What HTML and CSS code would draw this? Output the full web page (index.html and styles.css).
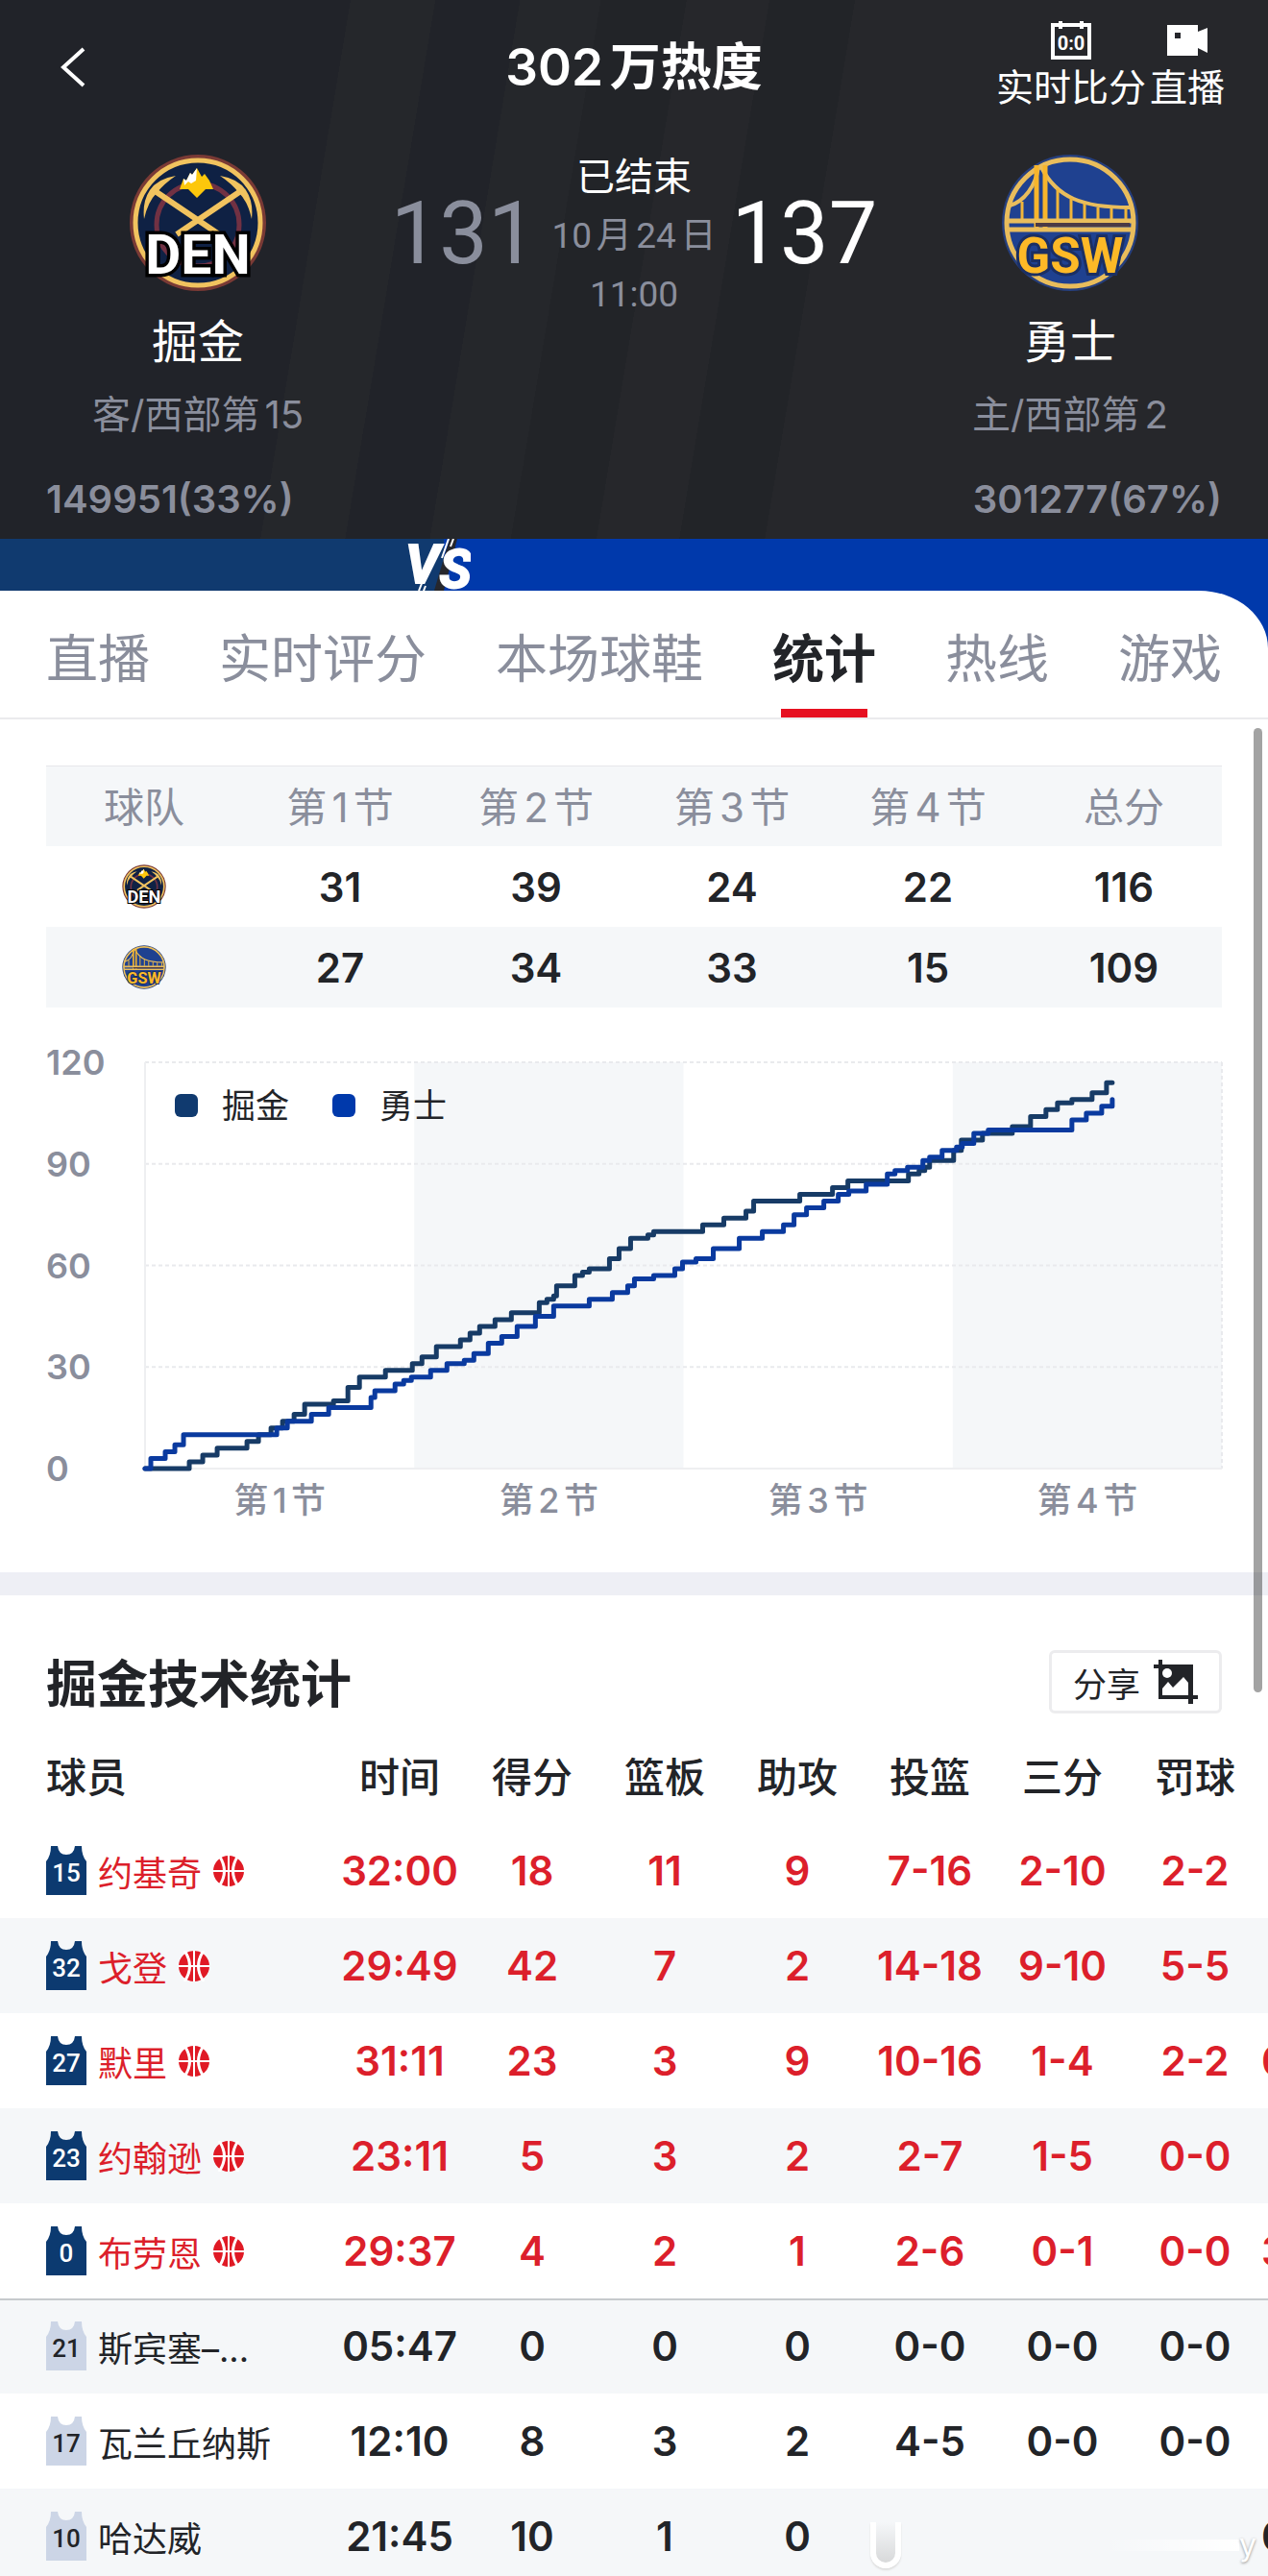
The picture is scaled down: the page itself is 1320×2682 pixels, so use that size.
FILE: index.html
```
<!DOCTYPE html>
<html lang="zh-CN">

<head>
    <meta charset="UTF-8">
    <meta name="viewport" content="width=device-width, initial-scale=1.0">
    <title>掘金 vs 勇士</title>
    <link rel="stylesheet" href="styles.css">
</head>

<body>
    <!-- Shared icons -->
    <svg class="sprite" aria-hidden="true">
        <symbol id="logo-den" viewBox="0 0 144 144">
            <circle cx="72" cy="72" r="71" fill="#7a3a35"/>
            <circle cx="72" cy="72" r="65" fill="#0f2144" stroke="#f1c35f" stroke-width="5"/>
            <circle cx="72" cy="74" r="43" fill="none" stroke="#713143" stroke-width="5"/>
            <path d="M26 38L94 84M118 38L50 84" stroke="#f1c35f" stroke-width="6"/>
            <path d="M49 23Q30 26 22 38Q14 50 16 68Q20 50 29 41Q37 31 49 23ZM95 23Q114 26 122 38Q130 50 128 68Q124 50 115 41Q107 31 95 23Z" fill="#f1c35f"/>
            <path d="M53 37L57 26L60 28L64 20L66 22L71 15L76 24L79 21L84 28L88 37L80 37L71 46L62 37Z" fill="#fdc70c"/>
            <path d="M57 26L60 28L64 20L66 22L71 15L70 28L65 31L62 29L58 33Z" fill="#fff"/>
            <text x="72" y="125" class="logo-text" font-size="57" fill="#fff" stroke="#000" stroke-width="7">DEN</text>
        </symbol>
        <symbol id="logo-gsw" viewBox="0 0 144 144">
            <circle cx="72" cy="72" r="71" fill="#263f7d"/>
            <circle cx="72" cy="72" r="66" fill="#1f4190" stroke="#e9bd5c" stroke-width="5"/>
            <path d="M42 14C58 46 85 56 134 56M39 14C36 34 24 50 9 54" fill="none" stroke="#e9bd5c" stroke-width="4"/>
            <path d="M22 50V68M59 36V68M73 46V68M87 52V68M101 56V68M115 57V68M130 57V68" stroke="#f0b63a" stroke-width="3"/>
            <path d="M37 12V78M46 12V78" stroke="#f7b52c" stroke-width="5"/>
            <path d="M6 70H138M6 79H138" stroke="#e9bd5c" stroke-width="5"/>
            <path d="M36 74H134" stroke="#4b3a45" stroke-width="4"/>
            <text x="72" y="124" class="logo-text" font-size="51" fill="#fdb927" stroke="#1b2f63" stroke-width="6">GSW</text>
        </symbol>
        <symbol id="jersey" viewBox="0 0 42 51">
            <path d="M5 0H12Q13 9 21 9Q29 9 30 0H37Q37 10 42 16V51H0V16Q5 10 5 0Z" fill="currentColor"/>
        </symbol>
        <symbol id="ball" viewBox="0 0 32 32">
            <circle cx="16" cy="16" r="16" fill="#e01a25"/>
            <path d="M16 0V32M0 16H32" stroke="#fff" stroke-width="2"/>
            <path d="M6 0Q17 16 6 32M26 0Q15 16 26 32" fill="none" stroke="#fff" stroke-width="3"/>
        </symbol>
    </svg>

    <div class="app">
        <header class="match-header">
            <div class="topbar">
                <button class="back" aria-label="返回">
                    <svg width="28" height="42" viewBox="0 0 28 42"><path d="M25 2L4 21L25 40" fill="none" stroke="#fff" stroke-width="4"/></svg>
                </button>
                <h1>302万热度</h1>
                <div class="actions">
                    <a href="#score">
                        <svg width="42" height="40" viewBox="0 0 42 40">
                            <path d="M2 4H40V38H2Z" fill="none" stroke="#fff" stroke-width="4"/>
                            <path d="M10 0V8M32 0V8" stroke="#fff" stroke-width="4"/>
                            <text x="21" y="30" class="mini-score">0:0</text>
                        </svg>
                        实时比分
                    </a>
                    <a href="#live">
                        <svg width="42" height="40" viewBox="0 0 42 40">
                            <path d="M0 4H32V11L42 7V33L32 28V36H0Z" fill="#fff"/>
                            <path d="M8 12H14V18H8Z" fill="#26272c"/>
                        </svg>
                        直播
                    </a>
                </div>
            </div>

            <div class="match">
                <div class="team">
                    <svg class="team-logo" role="img" aria-label="掘金"><use href="#logo-den"/></svg>
                    <div class="team-name">掘金</div>
                    <div class="team-rank">客/西部第15</div>
                </div>
                <div class="score">
                    <span class="points lost">131</span>
                    <div class="status">
                        <p class="state">已结束</p>
                        <p>10月24日</p>
                        <p>11:00</p>
                    </div>
                    <span class="points">137</span>
                </div>
                <div class="team">
                    <svg class="team-logo" role="img" aria-label="勇士"><use href="#logo-gsw"/></svg>
                    <div class="team-name">勇士</div>
                    <div class="team-rank">主/西部第2</div>
                </div>
            </div>

            <div class="votes">
                <span>149951(33%)</span>
                <span>301277(67%)</span>
            </div>
        </header>

        <div class="vote-bar">
            <svg class="vs" width="68" height="54" viewBox="0 0 68 54">
                <path d="M46 0L30 54H40L54 0Z" fill="#26272c"/>
                <path d="M45 0L38 20M50 0L47 8M14 54L22 34M19 54L21 49" stroke="#fff" stroke-width="2"/>
                <text x="0" y="46" class="vs-text">V<tspan dy="5">S</tspan></text>
            </svg>
        </div>

        <div class="sheet-back">
            <nav class="tabs">
                <a href="#live">直播</a>
                <a href="#rating">实时评分</a>
                <a href="#shoes">本场球鞋</a>
                <a href="#stats" class="active">统计</a>
                <a href="#hotline">热线</a>
                <a href="#games">游戏</a>
            </nav>
        </div>

        <main>
            <!-- Quarter scores -->
            <section class="quarters">
                <table class="quarter-table">
                    <thead>
                        <tr><th>球队</th><th>第1节</th><th>第2节</th><th>第3节</th><th>第4节</th><th>总分</th></tr>
                    </thead>
                    <tbody>
                        <tr>
                            <td><svg class="small-logo" role="img" aria-label="掘金"><use href="#logo-den"/></svg></td>
                            <td>31</td><td>39</td><td>24</td><td>22</td><td>116</td>
                        </tr>
                        <tr>
                            <td><svg class="small-logo" role="img" aria-label="勇士"><use href="#logo-gsw"/></svg></td>
                            <td>27</td><td>34</td><td>33</td><td>15</td><td>109</td>
                        </tr>
                    </tbody>
                </table>

                <!-- Score chart -->
                <div class="chart">
                    <div class="y-axis">
                        <span>120</span><span>90</span><span>60</span><span>30</span><span>0</span>
                    </div>
                    <div class="chart-main">
                        <div class="plot">
                            <!-- x: 280 per quarter, y: 120 minus the score -->
                            <svg class="lines" viewBox="0 0 1120 120" preserveAspectRatio="none">
                                <rect x="280" width="280" height="120" fill="#f5f7f9"/>
                                <rect x="840" width="280" height="120" fill="#f5f7f9"/>
                                <path class="grid-line" d="M0 0H1120M0 30H1120M0 60H1120M0 90H1120M1120 0V120"/>
                                <path class="axis-line" d="M0 0V120H1120"/>
                                <path class="line den" d="M0 120H46V118H60V116H75V114H106V112H118V110H131V108H143V106H155V104H166V101H196V100H211V96H223V93H250V91H278V89H288V87H303V84H328V82H338V80H348V78H364V76H381V74H410V71H418V70H425V69H428V66H447V63H455V62H462V61H483V58H493V55H505V52H523V51H529V50H580V48H602V46H625V44H633V41H681V39H715V37H731V35H794V33H805V32H811V31H816V29H841V26H849V23H871V21H902V19H921V16H937V14H949V12H964V11H985V9H1000V6H1006"/>
                                <path class="line gsw" d="M0 120H6V117H21V115H31V113H40V110H137V108H148V106H173V104H191V102H235V99H239V97H260V95H269V94H277V93H297V91H314V89H332V88H342V86H357V83H371V81H387V78H406V75H425V72H462V70H486V68H502V66H509V64H529V63H551V61H559V59H573V58H591V55H618V52H642V50H664V48H675V45H688V43H706V41H721V39H732V38H750V36H772V33H780V32H793V31H809V29H816V28H829V26H844V25H850V24H862V21H877V20H964V17H979V15H995V13H1006V11"/>
                            </svg>
                            <div class="legend">
                                <span class="swatch den-bg"></span><span>掘金</span>
                                <span class="swatch gsw-bg"></span><span>勇士</span>
                            </div>
                        </div>
                        <div class="x-axis">
                            <span>第1节</span><span>第2节</span><span>第3节</span><span>第4节</span>
                        </div>
                    </div>
                </div>
            </section>

            <!-- Player stats -->
            <section class="players">
                <div class="section-head">
                    <h2>掘金技术统计</h2>
                    <button class="share">
                        分享
                        <svg width="46" height="46" viewBox="0 0 46 46">
                            <path d="M5 0H9V5H41V37H46V41H41V46H36V41H5V9H0V5H5ZM9 37H36V24L31 18L20 29L15 23L9 30Z" fill="#222428" fill-rule="evenodd"/>
                            <circle cx="14" cy="14" r="5" fill="#fff"/>
                        </svg>
                    </button>
                </div>
                <table class="player-table">
                    <colgroup><col class="col-name"><col span="7"><col class="col-more"></colgroup>
                    <thead>
                        <tr><th>球员</th><th>时间</th><th>得分</th><th>篮板</th><th>助攻</th><th>投篮</th><th>三分</th><th>罚球</th><th></th></tr>
                    </thead>
                    <tbody>
                        <tr class="on-court">
                            <td><div class="player"><svg class="jersey"><use href="#jersey"/><text x="21" y="37">15</text></svg>约基奇<svg class="ball"><use href="#ball"/></svg></div></td>
                            <td>32:00</td><td>18</td><td>11</td><td>9</td><td>7-16</td><td>2-10</td><td>2-2</td><td></td>
                        </tr>
                        <tr class="on-court">
                            <td><div class="player"><svg class="jersey"><use href="#jersey"/><text x="21" y="37">32</text></svg>戈登<svg class="ball"><use href="#ball"/></svg></div></td>
                            <td>29:49</td><td>42</td><td>7</td><td>2</td><td>14-18</td><td>9-10</td><td>5-5</td><td></td>
                        </tr>
                        <tr class="on-court">
                            <td><div class="player"><svg class="jersey"><use href="#jersey"/><text x="21" y="37">27</text></svg>默里<svg class="ball"><use href="#ball"/></svg></div></td>
                            <td>31:11</td><td>23</td><td>3</td><td>9</td><td>10-16</td><td>1-4</td><td>2-2</td><td>0</td>
                        </tr>
                        <tr class="on-court">
                            <td><div class="player"><svg class="jersey"><use href="#jersey"/><text x="21" y="37">23</text></svg>约翰逊<svg class="ball"><use href="#ball"/></svg></div></td>
                            <td>23:11</td><td>5</td><td>3</td><td>2</td><td>2-7</td><td>1-5</td><td>0-0</td><td></td>
                        </tr>
                        <tr class="on-court">
                            <td><div class="player"><svg class="jersey"><use href="#jersey"/><text x="21" y="37">0</text></svg>布劳恩<svg class="ball"><use href="#ball"/></svg></div></td>
                            <td>29:37</td><td>4</td><td>2</td><td>1</td><td>2-6</td><td>0-1</td><td>0-0</td><td>3</td>
                        </tr>
                        <tr class="bench-first">
                            <td><div class="player"><svg class="jersey"><use href="#jersey"/><text x="21" y="37">21</text></svg>斯宾塞–...</div></td>
                            <td>05:47</td><td>0</td><td>0</td><td>0</td><td>0-0</td><td>0-0</td><td>0-0</td><td></td>
                        </tr>
                        <tr>
                            <td><div class="player"><svg class="jersey"><use href="#jersey"/><text x="21" y="37">17</text></svg>瓦兰丘纳斯</div></td>
                            <td>12:10</td><td>8</td><td>3</td><td>2</td><td>4-5</td><td>0-0</td><td>0-0</td><td></td>
                        </tr>
                        <tr>
                            <td><div class="player"><svg class="jersey"><use href="#jersey"/><text x="21" y="37">10</text></svg>哈达威</div></td>
                            <td>21:45</td><td>10</td><td>1</td><td>0</td><td></td><td></td><td></td><td>0</td>
                        </tr>
                    </tbody>
                </table>
            </section>
        </main>

        <div class="scrollbar"></div>
        <div class="watermark"><span class="watermark-icon"></span><span class="watermark-line"></span>y</div>
    </div>
</body>

</html>
```
FILE: styles.css
```
* {
    margin: 0;
    padding: 0;
    box-sizing: border-box;
}

body {
    font-family: Inter, "Noto Sans CJK SC", sans-serif;
    text-autospace: normal;
    color: #222428;
    background: #fff;
}

a {
    color: inherit;
    text-decoration: none;
}

button {
    font: inherit;
    color: inherit;
    background: none;
    border: none;
    cursor: pointer;
}

svg {
    display: block;
    flex-shrink: 0;
}

.sprite {
    display: none;
}

.app {
    position: relative;
    height: 100vh;
    overflow: hidden;
}

/* Header */
.match-header {
    color: #fff;
    padding-bottom: 17px;
    background: linear-gradient(99.5deg,
        #212329 360px, #25272b 360px, #25272b 447px,
        #212329 447px, #212329 534px, #25272b 534px, #25272b 617px,
        #222428 617px, #222428 705px, #26272b 705px, #26272b 790px,
        #222428 790px, #222428 878px, #26272b 878px);
}

.topbar {
    display: grid;
    grid-template-columns: 1fr auto 1fr;
    height: 132px;
    padding: 0 45px;
}

.back {
    justify-self: start;
    align-self: center;
    padding-left: 17px;
}

.topbar h1 {
    font-size: 53px;
    font-weight: 600;
    line-height: 140px;
}

.actions {
    display: flex;
    justify-content: flex-end;
    gap: 4px;
    padding-top: 22px;
    font-size: 39px;
    line-height: 44px;
    white-space: nowrap;
}

.actions a {
    display: flex;
    flex-direction: column;
    align-items: center;
    gap: 7px;
}

.mini-score {
    font: bold 20px Roboto, sans-serif;
    fill: #fff;
    text-anchor: middle;
}

.match {
    display: grid;
    grid-template-columns: 316px 1fr 316px;
    padding: 20px 48px 0;
}

.team {
    display: flex;
    flex-direction: column;
    align-items: center;
    padding-top: 8px;
}

.team-logo {
    width: 144px;
    height: 144px;
}

.logo-text {
    font-family: Roboto, sans-serif;
    font-weight: bold;
    text-anchor: middle;
    paint-order: stroke;
}

.team-name {
    font-size: 48px;
    line-height: 56px;
    margin-top: 24px;
}

.team-rank {
    font-size: 40px;
    line-height: 48px;
    margin-top: 24px;
    color: #8a8e9c;
}

.score {
    display: flex;
    justify-content: center;
    align-items: flex-start;
    gap: 16px;
}

.points {
    font-family: Roboto, sans-serif;
    font-size: 90px;
    line-height: 184px;
}

.points.lost {
    color: #8a8e9c;
}

.status {
    font-family: Roboto, "Noto Sans CJK SC", sans-serif;
    font-size: 37px;
    line-height: 61px;
    padding-top: 2px;
    text-align: center;
    color: #8a8e9c;
    white-space: nowrap;
}

.status .state {
    font-size: 40px;
    color: #fff;
}

.votes {
    display: flex;
    justify-content: space-between;
    margin-top: 40px;
    padding: 0 48px;
    font-size: 40px;
    font-weight: 600;
    line-height: 48px;
    color: #8a8e9c;
}

.vote-bar {
    position: relative;
    height: 54px;
    background: linear-gradient(90deg, #103a6f 35%, #0039ab 35%);
}

.vs {
    position: absolute;
    left: 32%;
    top: 0;
}

.vs-text {
    font: italic bold 56px Roboto, sans-serif;
    fill: #fff;
    stroke: #fff;
    stroke-width: 2;
}

/* Tabs */
.sheet-back {
    background: #0039ab;
}

.tabs {
    display: flex;
    justify-content: space-between;
    padding: 0 48px;
    background: #fff;
    border-bottom: 2px solid #ebebed;
    border-top-right-radius: 72px 60px;
}

.tabs a {
    position: relative;
    font-size: 54px;
    line-height: 132px;
    padding-top: 6px;
    height: 132px;
    color: #8a8e9c;
}

.tabs .active {
    color: #222428;
    font-weight: 600;
}

.tabs .active::after {
    content: "";
    position: absolute;
    left: 50%;
    bottom: 0;
    width: 90px;
    height: 9px;
    margin-left: -45px;
    background: #e60f20;
}

/* Quarter scores */
.quarters {
    padding: 48px 48px 55px;
    border-bottom: 24px solid #eeeff5;
}

table {
    width: 100%;
    table-layout: fixed;
    border-collapse: collapse;
    font-size: 42px;
}

.quarter-table tr {
    height: 84px;
    text-align: center;
}

.quarter-table th {
    font-weight: 400;
    color: #8a8e9c;
    box-shadow: inset 0 1px #e6e7ea;
    padding-bottom: 3px;
}

.quarter-table thead tr,
.quarter-table tbody tr:nth-child(2) {
    background: #f5f7f9;
}

.quarter-table td {
    font-weight: 600;
}

.small-logo {
    width: 46px;
    height: 46px;
    margin: 0 auto;
}

/* Score chart */
.chart {
    display: flex;
    margin-top: 39px;
}

.y-axis {
    display: flex;
    flex-direction: column;
    justify-content: space-between;
    width: 103px;
    height: 459px;
    font-size: 36px;
    font-weight: 600;
    line-height: 36px;
    color: #8a8e9c;
}

.chart-main {
    flex: 1;
    padding-top: 18px;
}

.plot {
    position: relative;
    height: 423px;
}

.lines {
    width: 100%;
    height: 100%;
    overflow: visible;
}

.lines path {
    fill: none;
    vector-effect: non-scaling-stroke;
}

.grid-line {
    stroke: #e9eaed;
    stroke-width: 2;
    stroke-dasharray: 4 3;
}

.axis-line {
    stroke: #eeeff1;
    stroke-width: 2;
}

.line {
    stroke-width: 5;
    stroke-linejoin: round;
    stroke-linecap: round;
}

.line.den {
    stroke: #173b66;
}

.line.gsw {
    stroke: #0a3a9f;
}

.legend {
    position: absolute;
    left: 31px;
    top: 21px;
    display: flex;
    align-items: center;
    gap: 25px;
    font-size: 35px;
    line-height: 48px;
}

.swatch {
    width: 24px;
    height: 24px;
    border-radius: 6px;
}

.legend .gsw-bg {
    margin-left: 20px;
}

.den-bg {
    background: #103a6f;
}

.gsw-bg {
    background: #0039ab;
}

.x-axis {
    display: grid;
    grid-template-columns: repeat(4, 1fr);
    margin-top: 13px;
    font-size: 36px;
    font-weight: 500;
    line-height: 40px;
    text-align: center;
    color: #8a8e9c;
}

/* Player stats */
.section-head {
    display: flex;
    justify-content: space-between;
    align-items: center;
    padding: 57px 48px 16px;
}

.section-head h2 {
    font-size: 53px;
    font-weight: 600;
    line-height: 60px;
    padding-top: 6px;
}

.share {
    display: flex;
    align-items: center;
    gap: 14px;
    height: 66px;
    padding: 0 22px;
    font-size: 35px;
    border: 3px solid #ececee;
    border-radius: 6px;
}

.col-name {
    width: 347px;
}

.col-more {
    width: 7px;
}

.player-table tr {
    height: 99px;
}

.player-table thead tr {
    height: 98px;
}

.player-table th {
    font-weight: 500;
    padding-bottom: 4px;
}

.player-table th:first-child {
    padding-left: 48px;
    text-align: left;
}

.player-table td {
    font-weight: 600;
    text-align: center;
}

.player-table td:last-child {
    overflow: hidden;
    text-align: left;
}

.player-table tbody tr:nth-child(even) {
    background: #f5f7f9;
}

.player-table .on-court {
    color: #dc1f2b;
}

.bench-first {
    box-shadow: inset 0 2px #c6cacd;
}

.player {
    display: flex;
    align-items: center;
    padding-left: 48px;
    font-size: 36px;
    font-weight: 400;
    white-space: nowrap;
}

.jersey {
    width: 42px;
    height: 51px;
    margin-right: 12px;
    color: #ccd5e6;
}

.jersey text {
    font: 500 26px Roboto, sans-serif;
    fill: #222428;
    text-anchor: middle;
}

.on-court .jersey {
    color: #0c3a70;
}

.on-court .jersey text {
    fill: #fff;
}

.ball {
    width: 32px;
    height: 32px;
    margin-left: 12px;
}

/* Overlays */
.scrollbar {
    position: absolute;
    top: 758px;
    right: 6px;
    width: 9px;
    height: 1004px;
    border-radius: 5px;
    background: rgba(0, 0, 0, 0.36);
}

.watermark {
    position: absolute;
    right: 12px;
    bottom: 8px;
    display: flex;
    align-items: center;
    width: 402px;
    font-size: 32px;
    line-height: 44px;
    color: #fff;
    text-shadow: 0 1px 3px #888;
}

.watermark-icon {
    width: 32px;
    height: 48px;
    border: 6px solid #fff;
    border-top: none;
    border-radius: 0 0 16px 16px;
    background: linear-gradient(#f5f7f9, #d8d9da);
    box-shadow: 0 2px 2px #ddd;
}

.watermark-line {
    flex: 1;
    height: 12px;
    background: linear-gradient(90deg, transparent 60%, #fff);
}
```
